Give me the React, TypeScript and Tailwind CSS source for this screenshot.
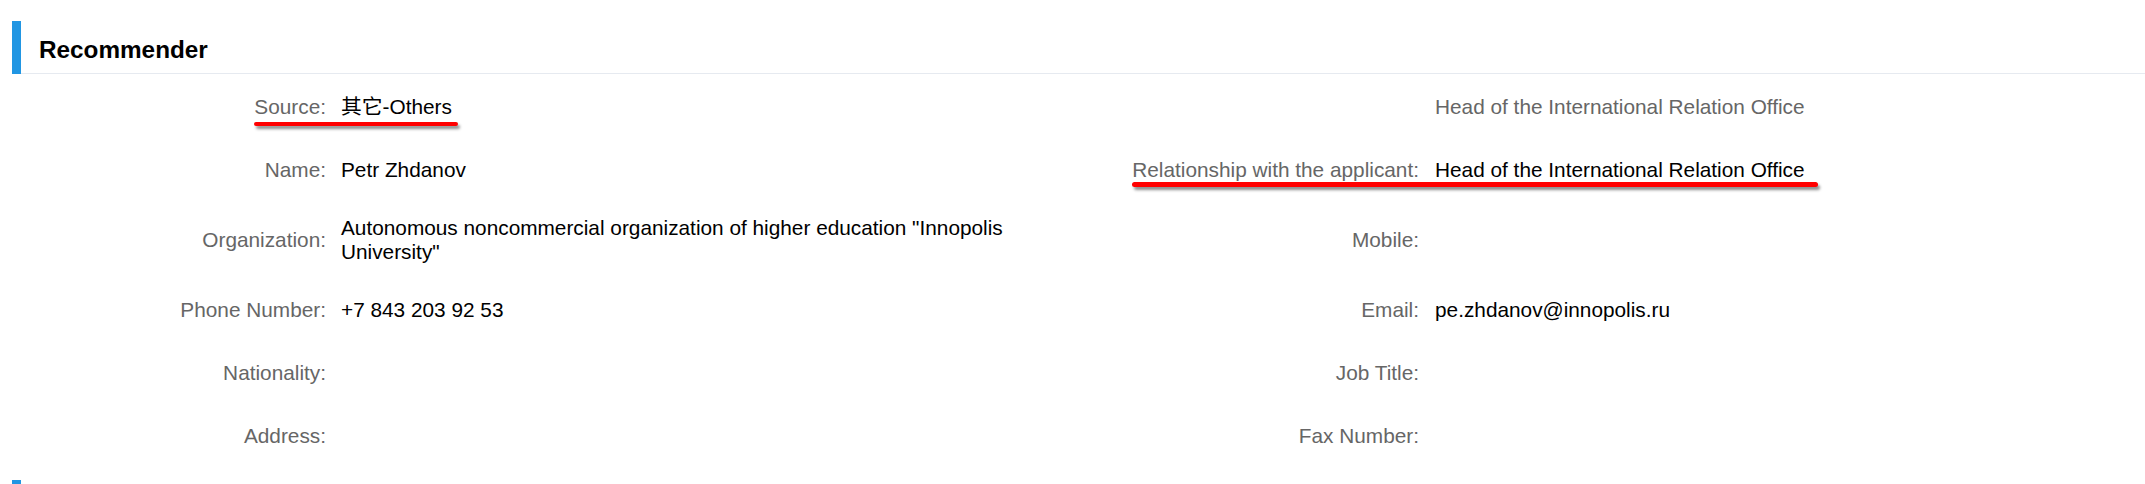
import React from "react";

const font = {
  fontFamily: '"Liberation Sans", Arial, "Noto Sans CJK SC", sans-serif',
};

type Cell = { label?: string; value?: React.ReactNode; muted?: boolean };

function Row({
  left,
  right,
  children,
}: {
  left: Cell;
  right: Cell;
  children?: React.ReactNode;
}) {
  return (
    <div className="relative grid grid-cols-[326px_746px_347px_1fr] pt-[16px] pb-[13px]">
      <div className="flex min-h-[34px] items-center justify-end text-right text-[#666666]">
        {left.label}
      </div>
      <div className="flex min-h-[34px] items-center pl-[15px] pr-[20px] text-black">
        <div>{left.value}</div>
      </div>
      <div className="flex min-h-[34px] items-center justify-end text-right text-[#666666]">
        {right.label}
      </div>
      <div
        className={
          "flex min-h-[34px] items-center pl-[16px] " +
          (right.muted ? "text-[#666666]" : "text-black")
        }
      >
        <div>{right.value}</div>
      </div>
      {children}
    </div>
  );
}

function Mark({ className }: { className: string }) {
  return (
    <div
      className={
        "pointer-events-none absolute rounded-full bg-[#ff0000] shadow-[2px_3px_3px_rgba(0,0,0,0.45)] " +
        className
      }
    />
  );
}

export default function App() {
  return (
    <div
      className="min-h-[484px] w-full bg-white pt-[21px] text-[20.8px] leading-[1.15]"
      style={font}
    >
      <section>
        <div className="flex pl-[12px]">
          <div className="h-[53px] w-[9px] bg-[#2196e3]" />
          <div className="flex h-[53px] flex-1 items-center border-b border-[#e6eaf0] pl-[18px] pt-[5px]">
            <h2 className="text-[24.3px] font-bold text-black">Recommender</h2>
          </div>
        </div>

        <Row
          left={{ label: "Source:", value: "其它-Others" }}
          right={{ value: "Head of the International Relation Office", muted: true }}
        >
          <Mark className="left-[254px] top-[48px] h-[4px] w-[204px]" />
        </Row>
        <Row
          left={{ label: "Name:", value: "Petr Zhdanov" }}
          right={{
            label: "Relationship with the applicant:",
            value: "Head of the International Relation Office",
          }}
        >
          <Mark className="left-[1132px] top-[45px] h-[5px] w-[686px]" />
        </Row>
        <Row
          left={{
            label: "Organization:",
            value:
              'Autonomous noncommercial organization of higher education "Innopolis University"',
          }}
          right={{ label: "Mobile:" }}
        />
        <Row
          left={{ label: "Phone Number:", value: "+7 843 203 92 53" }}
          right={{ label: "Email:", value: "pe.zhdanov@innopolis.ru" }}
        />
        <Row left={{ label: "Nationality:" }} right={{ label: "Job Title:" }} />
        <Row left={{ label: "Address:" }} right={{ label: "Fax Number:" }} />
      </section>

      <section className="mt-[14px]">
        <div className="flex pl-[12px]">
          <div className="h-[53px] w-[9px] bg-[#2196e3]" />
          <div className="h-[53px] flex-1 border-b border-[#e6eaf0]" />
        </div>
      </section>
    </div>
  );
}
